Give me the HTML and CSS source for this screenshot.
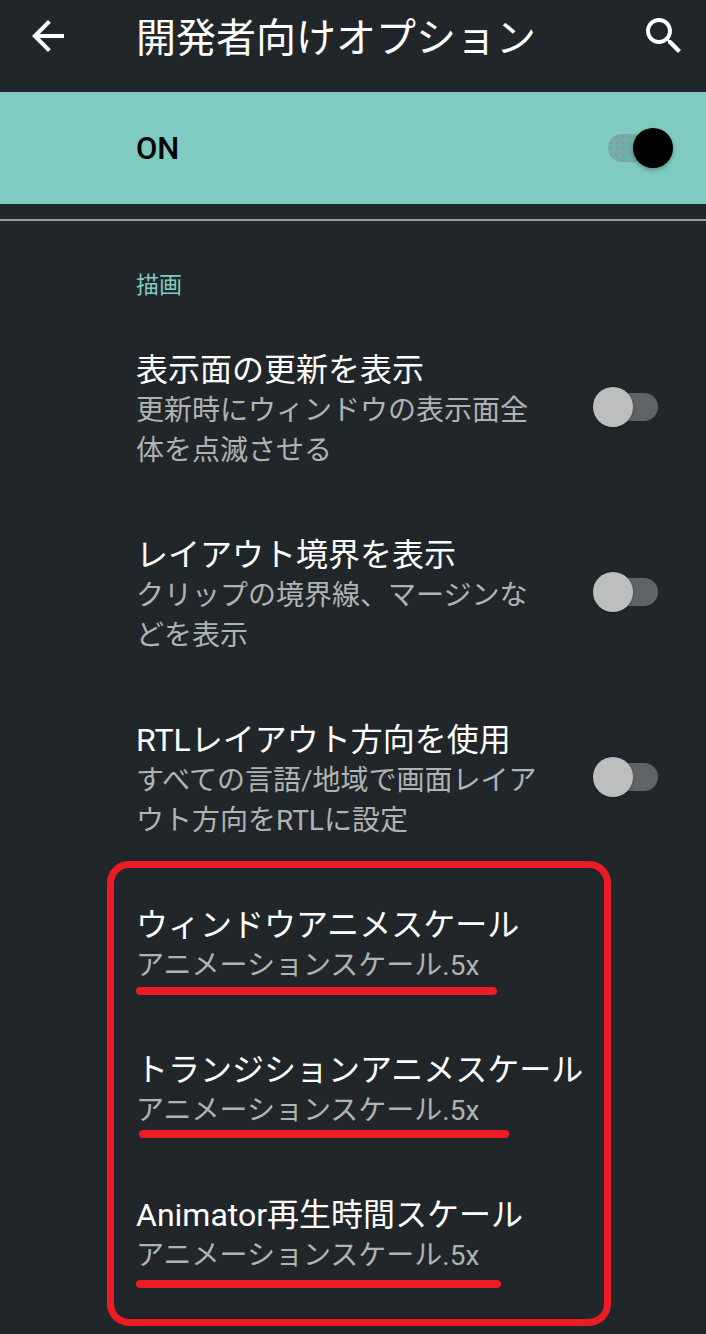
FILE: index.html
```html
<!DOCTYPE html>
<html lang="ja">
<head>
    <meta charset="UTF-8">
    <meta name="viewport" content="width=device-width, initial-scale=1.0">
    <title>開発者向けオプション</title>
    <link rel="stylesheet" href="styles.css">
</head>
<body>
<div class="page">
    <!-- Barra superior -->
    <header class="toolbar">
        <svg class="icon" viewBox="0 0 24 24"><path d="M20 11H7.83l5.59-5.59L12 4l-8 8 8 8 1.41-1.41L7.83 13H20v-2z"/></svg>
        <h1>開発者向けオプション</h1>
        <svg class="icon" viewBox="0 0 24 24"><path d="M15.5 14h-.79l-.28-.27C15.41 12.59 16 11.11 16 9.5 16 5.91 13.09 3 9.5 3S3 5.91 3 9.5 5.91 16 9.5 16c1.61 0 3.09-.59 4.23-1.57l.27.28v.79l5 4.99L20.49 19l-4.99-5zm-6 0C7.01 14 5 11.99 5 9.5S7.01 5 9.5 5 14 7.01 14 9.5 11.99 14 9.5 14z"/></svg>
    </header>

    <div class="master">
        <span>ON</span>
        <div class="switch on"><div class="knob"></div></div>
    </div>
    <div class="divider"></div>

    <main class="content">
        <h2>描画</h2>
        <div class="row">
            <div class="text">
                <h3>表示面の更新を表示</h3>
                <p>更新時にウィンドウの表示面全<br>体を点滅させる</p>
            </div>
            <div class="switch"><div class="knob"></div></div>
        </div>
        <div class="row">
            <div class="text">
                <h3>レイアウト境界を表示</h3>
                <p>クリップの境界線、マージンな<br>どを表示</p>
            </div>
            <div class="switch"><div class="knob"></div></div>
        </div>
        <div class="row">
            <div class="text">
                <h3>RTLレイアウト方向を使用</h3>
                <p>すべての言語/地域で画面レイア<br>ウト方向をRTLに設定</p>
            </div>
            <div class="switch"><div class="knob"></div></div>
        </div>
        <div class="row">
            <div class="text">
                <h3>ウィンドウアニメスケール</h3>
                <p>アニメーションスケール.5x</p>
            </div>
        </div>
        <div class="row">
            <div class="text">
                <h3>トランジションアニメスケール</h3>
                <p>アニメーションスケール.5x</p>
            </div>
        </div>
        <div class="row">
            <div class="text">
                <h3>Animator再生時間スケール</h3>
                <p>アニメーションスケール.5x</p>
            </div>
        </div>
    </main>

    <!-- Marcas vermelhas por cima do conteúdo -->
    <div class="mark-box"></div>
    <div class="mark-line line-1"></div>
    <div class="mark-line line-2"></div>
    <div class="mark-line line-3"></div>
</div>
</body>
</html>
```
FILE: styles.css
```css
body {
    margin: 0;
    background-color: #21262b;
    font-family: Roboto, "Noto Sans CJK JP", sans-serif;
}

.page {
    position: relative;
    width: 706px;
    height: 1334px;
    overflow: hidden;
}

/* Barra superior */
.toolbar {
    display: flex;
    align-items: flex-start;
    height: 92px;
    padding: 12px 18px 0 24px;
    box-sizing: border-box;
}

.toolbar .icon {
    width: 48px;
    height: 48px;
    fill: #fff;
    flex: none;
}

.toolbar h1 {
    flex: 1;
    margin: 1px 0 0 64px;
    font-size: 40px;
    line-height: 52px;
    font-weight: 400;
    color: #fff;
    white-space: nowrap;
}

/* Faixa ON */
.master {
    display: flex;
    align-items: center;
    justify-content: space-between;
    height: 112px;
    padding: 0 43px 0 136px;
    background-color: #7fcbc1;
    font-size: 31px;
    font-weight: 500;
    color: #000;
}

.divider {
    height: 2px;
    margin-top: 15px;
    background-color: #9a9c9e;
}

/* Lista */
.content {
    padding: 50px 48px 0 136px;
}

.content h2 {
    margin: 0 0 49px;
    font-size: 23px;
    line-height: 30px;
    font-weight: 400;
    color: #7fcbc1;
}

.row {
    display: flex;
    align-items: center;
    justify-content: space-between;
    margin-bottom: 64px;
}

.row h3 {
    margin: 0;
    font-size: 32px;
    line-height: 41px;
    font-weight: 400;
    color: #fff;
    white-space: nowrap;
}

.row p {
    margin: 0;
    font-size: 28px;
    line-height: 40px;
    color: #b0b3b3;
    white-space: nowrap;
}

.switch {
    position: relative;
    flex: none;
    width: 55px;
    height: 28px;
    border-radius: 14px;
    background-color: #5f6366;
}

.row .switch {
    margin-bottom: 7px;
}

.switch .knob {
    position: absolute;
    top: -6px;
    left: -10px;
    width: 40px;
    height: 40px;
    border-radius: 50%;
    background-color: #bcbfbe;
    box-shadow: 0 1px 3px rgba(0, 0, 0, 0.25);
}

.switch.on {
    background-color: #6fb0a8;
    background-image: radial-gradient(#9b8f92 0.7px, transparent 1px);
    background-size: 6px 6px;
}

.switch.on .knob {
    left: auto;
    right: -10px;
    background-color: #000;
    box-shadow: 0 2px 4px rgba(0, 0, 0, 0.3);
}

/* Marcas vermelhas */
.mark-box {
    position: absolute;
    left: 107px;
    top: 861px;
    width: 504px;
    height: 465px;
    box-sizing: border-box;
    border: 7px solid #ed1c24;
    border-radius: 22px;
}

.mark-line {
    position: absolute;
    height: 8px;
    border-radius: 4px;
    background-color: #ed1c24;
}

.line-1 {
    left: 136px;
    top: 987px;
    width: 361px;
}

.line-2 {
    left: 139px;
    top: 1130px;
    width: 370px;
}

.line-3 {
    left: 136px;
    top: 1280px;
    width: 365px;
}
```
